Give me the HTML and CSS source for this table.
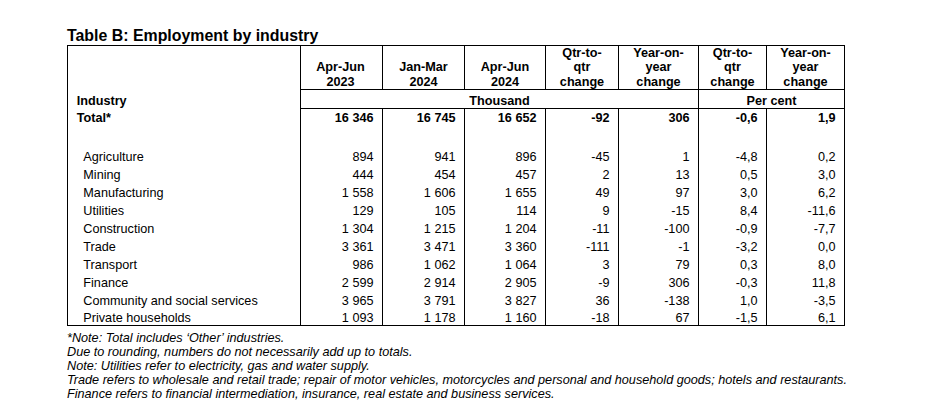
FILE: index.html
```html
<!DOCTYPE html>
<html lang="en">
<head>
<meta charset="utf-8">
<title>Table B: Employment by industry</title>
<link rel="stylesheet" href="styles.css">
</head>
<body>
<div class="page">
  <h1 class="title">Table B: Employment by industry</h1>
  <table class="emp">
    <thead>
      <tr class="hdr">
        <th class="c1 blank"></th>
        <th class="c2">Apr-Jun<br>2023</th>
        <th class="c3">Jan-Mar<br>2024</th>
        <th class="c4">Apr-Jun<br>2024</th>
        <th class="c5">Qtr-to-<br>qtr<br>change</th>
        <th class="c6">Year-on-<br>year<br>change</th>
        <th class="c7">Qtr-to-<br>qtr<br>change</th>
        <th class="c8">Year-on-<br>year<br>change</th>
      </tr>
      <tr class="units">
        <th class="lab">Industry</th>
        <th class="unit" colspan="5">Thousand</th>
        <th class="unit" colspan="2">Per cent</th>
      </tr>
    </thead>
    <tbody>
      <tr class="total">
        <td class="lab">Total*</td><td>16 346</td><td>16 745</td><td>16 652</td><td>-92</td><td>306</td><td>-0,6</td><td>1,9</td>
      </tr>
      <tr class="spacer">
        <td></td><td></td><td></td><td></td><td></td><td></td><td></td><td></td>
      </tr>
      <tr class="row">
        <td class="sub">Agriculture</td><td>894</td><td>941</td><td>896</td><td>-45</td><td>1</td><td>-4,8</td><td>0,2</td>
      </tr>
      <tr class="row">
        <td class="sub">Mining</td><td>444</td><td>454</td><td>457</td><td>2</td><td>13</td><td>0,5</td><td>3,0</td>
      </tr>
      <tr class="row">
        <td class="sub">Manufacturing</td><td>1 558</td><td>1 606</td><td>1 655</td><td>49</td><td>97</td><td>3,0</td><td>6,2</td>
      </tr>
      <tr class="row">
        <td class="sub">Utilities</td><td>129</td><td>105</td><td>114</td><td>9</td><td>-15</td><td>8,4</td><td>-11,6</td>
      </tr>
      <tr class="row">
        <td class="sub">Construction</td><td>1 304</td><td>1 215</td><td>1 204</td><td>-11</td><td>-100</td><td>-0,9</td><td>-7,7</td>
      </tr>
      <tr class="row">
        <td class="sub">Trade</td><td>3 361</td><td>3 471</td><td>3 360</td><td>-111</td><td>-1</td><td>-3,2</td><td>0,0</td>
      </tr>
      <tr class="row">
        <td class="sub">Transport</td><td>986</td><td>1 062</td><td>1 064</td><td>3</td><td>79</td><td>0,3</td><td>8,0</td>
      </tr>
      <tr class="row">
        <td class="sub">Finance</td><td>2 599</td><td>2 914</td><td>2 905</td><td>-9</td><td>306</td><td>-0,3</td><td>11,8</td>
      </tr>
      <tr class="row">
        <td class="sub">Community and social services</td><td>3 965</td><td>3 791</td><td>3 827</td><td>36</td><td>-138</td><td>1,0</td><td>-3,5</td>
      </tr>
      <tr class="row lastrow">
        <td class="sub">Private households</td><td>1 093</td><td>1 178</td><td>1 160</td><td>-18</td><td>67</td><td>-1,5</td><td>6,1</td>
      </tr>
    </tbody>
  </table>
  <div class="notes">
    <p>*Note: Total includes ‘Other’ industries.</p>
    <p>Due to rounding, numbers do not necessarily add up to totals.</p>
    <p>Note: Utilities refer to electricity, gas and water supply.</p>
    <p>Trade refers to wholesale and retail trade; repair of motor vehicles, motorcycles and personal and household goods; hotels and restaurants.</p>
    <p>Finance refers to financial intermediation, insurance, real estate and business services.</p>
  </div>
</div>
</body>
</html>
```

FILE: styles.css
```css
* {
  box-sizing: border-box;
}

html,
body {
  margin: 0;
  background: #ffffff;
}

body {
  font-family: "Liberation Sans", Arial, sans-serif;
  color: #000000;
}

.page {
  padding: 26px 0 0 67px;
}

.title {
  margin: 0;
  font-size: 15.9px;
  line-height: 19px;
  font-weight: bold;
}

.emp {
  table-layout: fixed;
  width: 778px;
  border-collapse: separate;
  border-spacing: 0;
  border-left: 1px solid #000;
  border-top: 1px solid #000;
  border-bottom: 1px solid #000;
  font-size: 12.67px;
}

.emp th,
.emp td {
  padding: 0 8.5px 0 0;
  border-right: 1px solid #000;
  text-align: right;
  white-space: nowrap;
  font-weight: normal;
  line-height: 14px;
}

.c1 { width: 233px; }
.c2 { width: 82px; }
.c3 { width: 82px; }
.c4 { width: 81px; }
.c5 { width: 73px; }
.c6 { width: 80px; }
.c7 { width: 68px; }
.c8 { width: 78px; }

.hdr th {
  padding: 0;
  vertical-align: bottom;
  text-align: center;
  font-weight: bold;
  line-height: 14.333px;
  border-bottom: 1px solid #000;
}

.hdr th.c2 {
  padding-right: 2px;
}

.hdr th.blank {
  border-bottom: none;
}

.units th {
  padding: 4px 0 0;
  text-align: center;
  font-weight: bold;
  border-bottom: 1px solid #000;
}

.units th.lab {
  text-align: left;
  padding-left: 8.7px;
  border-bottom: none;
}

.total td {
  padding-top: 2px;
  padding-bottom: 2px;
  font-weight: bold;
}

.total td.lab {
  text-align: left;
  padding-left: 8.7px;
}

.spacer td {
  height: 21px;
  padding: 0;
}

.row td {
  padding-top: 2px;
  padding-bottom: 2px;
}

.row td.sub {
  text-align: left;
  padding-left: 15.3px;
}

.row.lastrow td {
  padding-top: 1px;
  padding-bottom: 0;
}

.notes {
  margin-top: 5px;
  font-size: 12.67px;
  line-height: 14.1px;
  font-style: italic;
}

.notes p {
  margin: 0;
}
```
